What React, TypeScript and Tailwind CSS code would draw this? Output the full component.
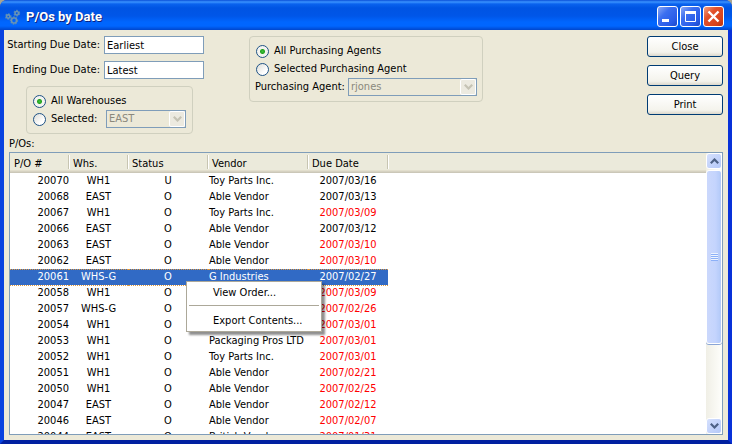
import { useState } from "react";
import type { ReactNode } from "react";

type Order = { id: string; whs: string; status: string; vendor: string; due: string; late?: boolean };

const ORDERS: Order[] = [
  { id: "20070", whs: "WH1", status: "U", vendor: "Toy Parts Inc.", due: "2007/03/16" },
  { id: "20068", whs: "EAST", status: "O", vendor: "Able Vendor", due: "2007/03/13" },
  { id: "20067", whs: "WH1", status: "O", vendor: "Toy Parts Inc.", due: "2007/03/09", late: true },
  { id: "20066", whs: "EAST", status: "O", vendor: "Able Vendor", due: "2007/03/12" },
  { id: "20063", whs: "EAST", status: "O", vendor: "Able Vendor", due: "2007/03/10", late: true },
  { id: "20062", whs: "EAST", status: "O", vendor: "Able Vendor", due: "2007/03/10", late: true },
  { id: "20061", whs: "WHS-G", status: "O", vendor: "G Industries", due: "2007/02/27", late: true },
  { id: "20058", whs: "WH1", status: "O", vendor: "", due: "2007/03/09", late: true },
  { id: "20057", whs: "WHS-G", status: "O", vendor: "", due: "2007/02/26", late: true },
  { id: "20054", whs: "WH1", status: "O", vendor: "", due: "2007/03/01", late: true },
  { id: "20053", whs: "WH1", status: "O", vendor: "Packaging Pros LTD", due: "2007/03/01", late: true },
  { id: "20052", whs: "WH1", status: "O", vendor: "Toy Parts Inc.", due: "2007/03/01", late: true },
  { id: "20051", whs: "WH1", status: "O", vendor: "Able Vendor", due: "2007/02/21", late: true },
  { id: "20050", whs: "WH1", status: "O", vendor: "Able Vendor", due: "2007/02/25", late: true },
  { id: "20047", whs: "EAST", status: "O", vendor: "Able Vendor", due: "2007/02/12", late: true },
  { id: "20046", whs: "EAST", status: "O", vendor: "Able Vendor", due: "2007/02/07", late: true },
  { id: "20044", whs: "EAST", status: "O", vendor: "British Vendor", due: "2007/01/31", late: true },
];

function GearsIcon() {
  return (
    <svg className="h-4 w-4" viewBox="0 0 16 16" fill="none" aria-hidden="true">
      <g stroke="#4a86c0" strokeWidth="2.6" strokeDasharray="1.3 0.8">
        <circle cx="3.2" cy="7.5" r="2" />
        <circle cx="11.8" cy="4.2" r="2.1" />
        <circle cx="9" cy="11.5" r="2.9" />
      </g>
      <g stroke="#6b94b4" strokeWidth="1.4">
        <circle cx="3.2" cy="7.5" r="1.7" />
        <circle cx="11.8" cy="4.2" r="1.8" />
        <circle cx="9" cy="11.5" r="2.6" />
      </g>
    </svg>
  );
}

function CaptionButton({ label, close, children }: { label: string; close?: boolean; children: ReactNode }) {
  return (
    <button
      type="button"
      aria-label={label}
      className={
        "flex h-[21px] w-[21px] items-center justify-center rounded-[3px] border border-white " +
        (close
          ? "bg-[linear-gradient(135deg,#f0a080_0%,#e2512b_35%,#d8431c_75%,#b83410_100%)]"
          : "bg-[linear-gradient(135deg,#8aa8f5_0%,#3c6ff0_35%,#2a5ce8_75%,#1c48c8_100%)]")
      }
    >
      <svg className="h-[19px] w-[19px]" viewBox="0 0 19 19" fill="none" stroke="#fff" aria-hidden="true">
        {children}
      </svg>
    </button>
  );
}

function Chevron({ up, color }: { up?: boolean; color: string }) {
  return (
    <svg className="h-[6px] w-[9px]" viewBox="0 0 9 6" fill="none" stroke={color} strokeWidth="2.2" aria-hidden="true">
      <path d={up ? "M0.8 5.2 4.5 1.5 8.2 5.2" : "M0.8 0.8 4.5 4.5 8.2 0.8"} />
    </svg>
  );
}

function Radio({ name, value, label, group }: { name: string; value: string; label: string; group: [string, (v: string) => void] }) {
  const [current, setCurrent] = group;
  return (
    <label className="flex h-[18px] items-center gap-[5px]">
      <input
        type="radio"
        name={name}
        checked={current === value}
        onChange={() => setCurrent(value)}
        className="h-[13px] w-[13px] appearance-none rounded-full border border-[#1f5386] bg-[linear-gradient(135deg,#dcdcd6,#ffffff_70%)] checked:bg-[radial-gradient(circle,#3fc43c_0,#23a120_2px,#f4f4f0_3px,#f4f4f0_100%)]"
      />
      <span>{label}</span>
    </label>
  );
}

function DisabledSelect({ id, value, label, className }: { id: string; value: string; label: string; className: string }) {
  return (
    <div className={"relative h-[18px] " + className}>
      <select
        id={id}
        aria-label={label}
        disabled
        className="block h-full w-full appearance-none border border-[#7f9db9] bg-[#ece9d8] pl-[2px] text-[#8a887c] opacity-100"
      >
        <option>{value}</option>
      </select>
      <span className="pointer-events-none absolute inset-y-px right-px flex w-4 items-center justify-center rounded-[2px] border border-white bg-[#eceae0]">
        <Chevron color="#c5c3b4" />
      </span>
    </div>
  );
}

function DateField({ id, label, value }: { id: string; label: string; value: string }) {
  return (
    <div className="flex items-center justify-end gap-1">
      <label htmlFor={id} className="whitespace-nowrap">
        {label}
      </label>
      <input id={id} defaultValue={value} className="h-[18px] w-[100px] shrink-0 border border-[#7f9db9] bg-white px-[2px]" />
    </div>
  );
}

function ScrollButton({ up }: { up?: boolean }) {
  return (
    <button
      type="button"
      aria-label={up ? "Scroll up" : "Scroll down"}
      className="flex h-4 w-4 shrink-0 items-center justify-center rounded-[3px] border border-white bg-[linear-gradient(135deg,#d5e0fd,#b4c8f8)]"
    >
      <Chevron up={up} color="#4d6185" />
    </button>
  );
}

const HEADERS = ["P/O #", "Whs.", "Status", "Vendor", "Due Date"];

export default function App() {
  const warehouse = useState("all");
  const agent = useState("all");
  const [selected, setSelected] = useState("20061");

  return (
    <div className="h-screen bg-[#a8a492] font-['DejaVu_Sans_Condensed','DejaVu_Sans',sans-serif] text-[11px] leading-4 text-black select-none">
      <div className="flex h-full flex-col rounded-t-[7px] bg-[#0842d8]">
        <header className="flex h-[30px] shrink-0 items-center rounded-t-[7px] bg-[linear-gradient(180deg,#0a4fd8_0px,#3a93ff_2px,#0a62ee_4px,#0054e3_8px,#0056e8_16px,#0066fe_22px,#0066ff_26px,#0046cc_30px)] pt-[3px] pr-2 pl-[5px]">
          <GearsIcon />
          <h1 className="flex-1 pl-[5px] font-['Roboto',sans-serif] text-[13px] font-bold text-white [text-shadow:1px_1px_#0a1f80]">
            P/Os by Date
          </h1>
          <div className="flex gap-[2px]">
            <CaptionButton label="Minimize">
              <path d="M4 13.5h7" strokeWidth="3" />
            </CaptionButton>
            <CaptionButton label="Maximize">
              <path d="M4 5.5h11" strokeWidth="3" />
              <path d="M4.5 5v9.5h10V5" />
            </CaptionButton>
            <CaptionButton label="Close window" close>
              <path d="M4.5 4.5l10 10M14.5 4.5l-10 10" strokeWidth="2.4" />
            </CaptionButton>
          </div>
        </header>

        <div className="flex min-h-0 flex-1 border-4 border-t-0 border-r-[#0831d9] border-b-[#0020a0] border-l-[#0842e0]">
          <main className="flex min-w-0 flex-1 flex-col bg-[#ece9d8] p-[5px]">
            <div className="flex items-start pt-px">
              <div className="flex w-[195px] flex-col gap-[7px]">
                <DateField id="start-date" label="Starting Due Date:" value="Earliest" />
                <DateField id="end-date" label="Ending Due Date:" value="Latest" />
                <fieldset className="ml-[17px] w-[167px] rounded-[4px] border border-[#d0d0bf] px-[6px] py-[5px]">
                  <Radio name="whs" value="all" label="All Warehouses" group={warehouse} />
                  <div className="flex items-center justify-between">
                    <Radio name="whs" value="one" label="Selected:" group={warehouse} />
                    <DisabledSelect id="warehouse" label="Warehouse" value="EAST" className="w-[80px]" />
                  </div>
                </fieldset>
              </div>

              <fieldset className="ml-[45px] w-[234px] rounded-[4px] border border-[#d0d0bf] px-[5px] py-[5px]">
                <div className="pl-px">
                  <Radio name="agent" value="all" label="All Purchasing Agents" group={agent} />
                  <Radio name="agent" value="one" label="Selected Purchasing Agent" group={agent} />
                </div>
                <div className="flex items-center justify-between">
                  <label htmlFor="agent">Purchasing Agent:</label>
                  <DisabledSelect id="agent" label="Purchasing Agent" value="rjones" className="w-[129px]" />
                </div>
              </fieldset>

              <div className="ml-auto flex w-[76px] flex-col gap-2">
                {["Close", "Query", "Print"].map((text) => (
                  <button
                    key={text}
                    type="button"
                    className="h-[21px] rounded-[3px] border border-[#003c74] bg-[linear-gradient(180deg,#ffffff,#f4f3ec_80%,#dcd8cc)]"
                  >
                    {text}
                  </button>
                ))}
              </div>
            </div>

            <p className="pt-[2px]" id="orders-label">
              P/Os:
            </p>
            <section className="relative flex min-h-0 flex-1 overflow-hidden border border-[#7f9db9] bg-white">
              <table className="h-min min-w-0 flex-1 table-fixed border-collapse whitespace-nowrap" aria-labelledby="orders-label">
                <colgroup>
                  <col className="w-[59px]" />
                  <col className="w-[59px]" />
                  <col className="w-[80px]" />
                  <col className="w-[100px]" />
                  <col className="w-[80px]" />
                  <col />
                </colgroup>
                <thead className="bg-[#ebeadb]">
                  <tr className="h-5 shadow-[inset_0_-1px_#cbc7b8,inset_0_-2px_#d6d2c2,inset_0_-3px_#e2decd]">
                    {HEADERS.map((h) => (
                      <th key={h} scope="col" className="p-0 text-left font-normal">
                        <span className="mb-[2px] block h-[14px] border-r border-[#c7c5b2] pl-1 leading-[18px] shadow-[1px_0_#ffffff]">{h}</span>
                      </th>
                    ))}
                    <td />
                  </tr>
                </thead>
                <tbody>
                  {ORDERS.map((o) => {
                    const on = o.id === selected;
                    const tone = on ? "bg-[#316ac5] text-white" : "";
                    const line = on ? " [border-block:1px_dotted_#e09a40]" : "";
                    return (
                      <tr key={o.id} className="h-4 leading-[14px]" onClick={() => setSelected(o.id)} aria-selected={on}>
                        <td className={"p-0 text-right " + tone + line}>{o.id}</td>
                        <td className={"p-0 text-center " + tone + line}>{o.whs}</td>
                        <td className={"p-0 text-center " + tone + line}>{o.status}</td>
                        <td className={"p-0 pl-px " + tone + line}>{o.vendor}</td>
                        <td className={"p-0 text-center " + (on ? tone : o.late ? "text-[#ff0000]" : "") + line}>{o.due}</td>
                        <td />
                      </tr>
                    );
                  })}
                </tbody>
              </table>

              <div className="flex w-4 shrink-0 flex-col justify-between bg-[linear-gradient(90deg,#f0efe6,#fefefb)]">
                <div className="flex h-[68%] min-h-0 flex-col gap-px">
                  <ScrollButton up />
                  <div className="flex flex-1 flex-col items-center justify-center rounded-[3px] border border-white bg-[linear-gradient(90deg,#cbd8fc,#c4d4fd_60%,#b2c9f8)] shadow-[0_1px_#8aa5d6]">
                    {[0, 1, 2, 3].map((n) => (
                      <span key={n} className="h-[2px] w-[7px] border-b border-[#8cb0f8] bg-[#eef4fe]" />
                    ))}
                  </div>
                </div>
                <ScrollButton />
              </div>

              <div
                role="menu"
                className="absolute top-32 left-44 flex w-[136px] flex-col border border-[#aca899] bg-white px-[2px] pt-[3px] pb-[2px] shadow-[3px_3px_2px_#00000070]"
              >
                <button type="button" role="menuitem" className="h-4 pl-6 text-left">
                  View Order...
                </button>
                <hr className="mt-1 mb-[7px] border-[#aca899]" />
                <button type="button" role="menuitem" className="h-4 pl-6 text-left">
                  Export Contents...
                </button>
              </div>
            </section>
          </main>
        </div>
      </div>
    </div>
  );
}
